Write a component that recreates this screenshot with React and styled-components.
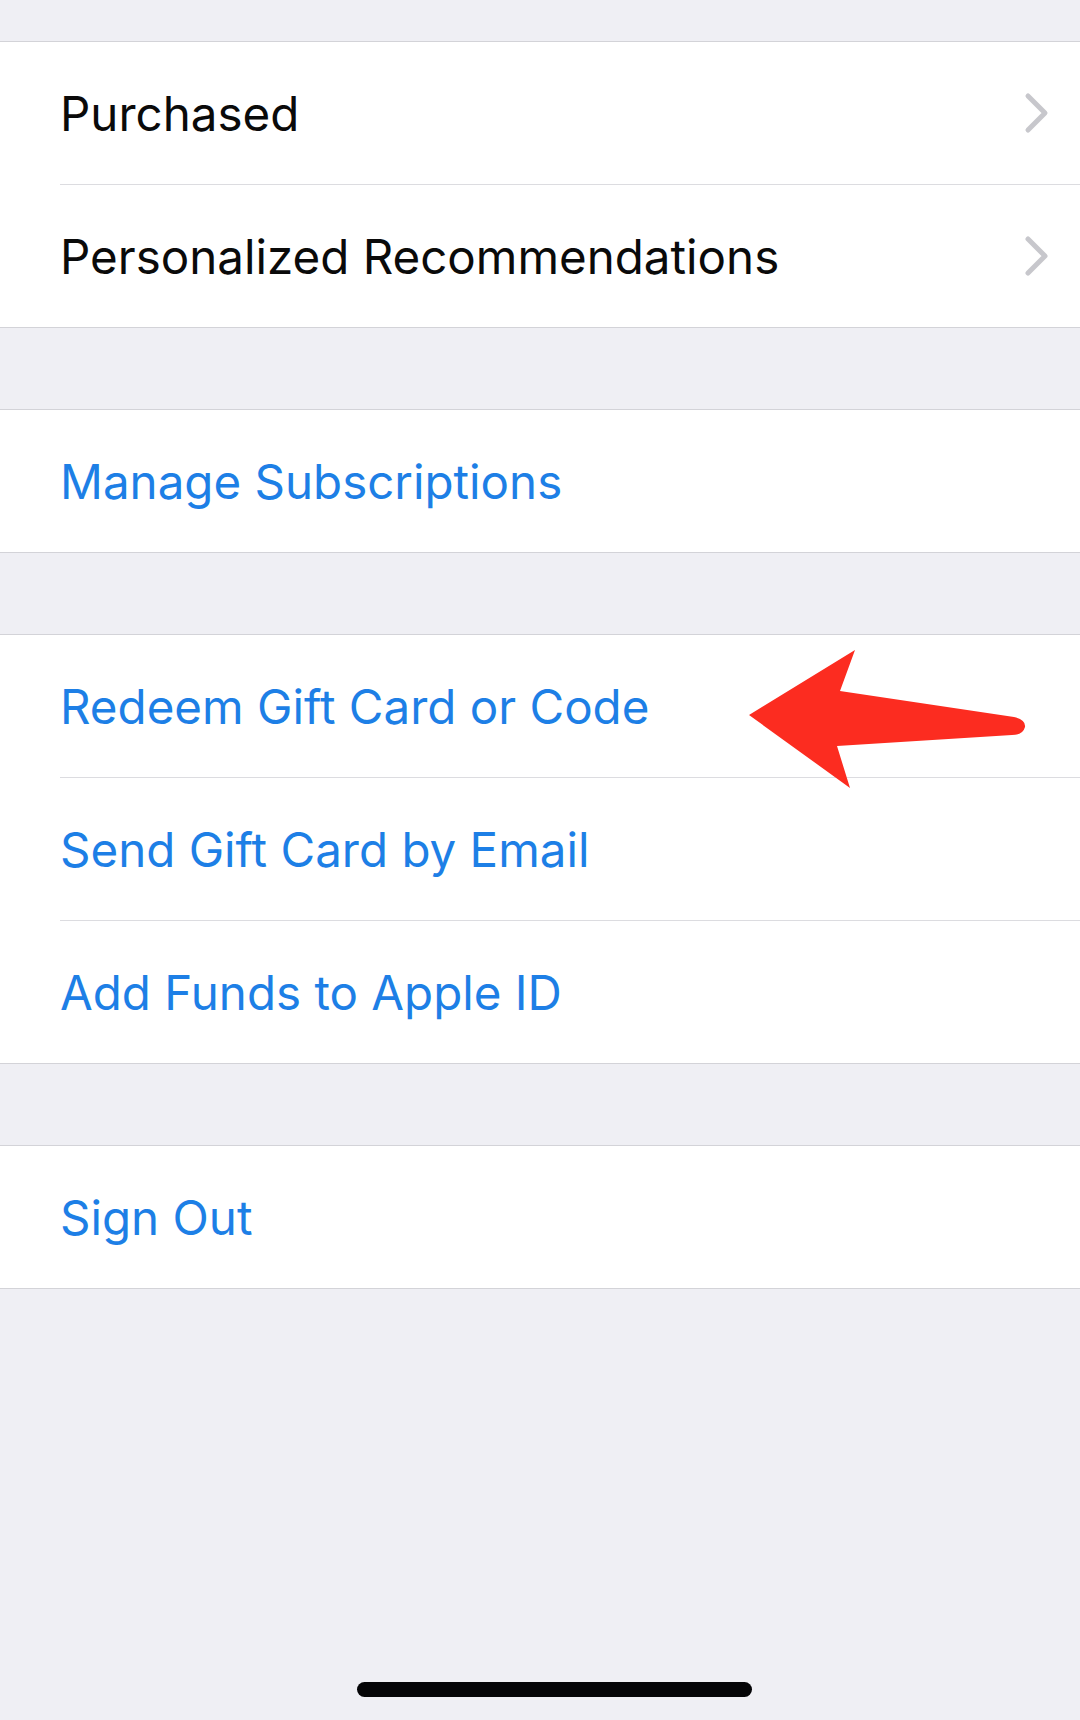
import React from "react";
import styled, { createGlobalStyle } from "styled-components";

const GlobalStyle = createGlobalStyle`
  html, body {
    margin: 0;
    padding: 0;
    background: #efeff4;
  }
  * {
    box-sizing: border-box;
  }
`;

const Page = styled.div`
  position: relative;
  width: 1080px;
  min-height: 1720px;
  padding-top: 41px;
  background: #efeff4;
  font-family: Inter, "Noto Sans", sans-serif;
`;

const Group = styled.div`
  background: #fff;
  border-top: 1px solid #d3d3d8;
  border-bottom: 1px solid #d3d3d8;
  margin-bottom: 81px;
`;

const Row = styled.div`
  display: flex;
  align-items: center;
  height: ${(p) => (p.last ? 142 : 143)}px;
  margin-left: 60px;
  padding-right: 30px;
  border-bottom: ${(p) => (p.last ? "none" : "1px solid #dcdce0")};
`;

const Label = styled.span`
  flex: 1;
  font-size: 47.5px;
  font-weight: 400;
  letter-spacing: 0;
  color: ${(p) => (p.link ? "#1d7fe6" : "#0a0a0a")};
`;

const Chevron = () => (
  <svg width="26" height="42" viewBox="0 0 26 42">
    <polyline
      points="4,4 21,21 4,38"
      fill="none"
      stroke="#c7c7cc"
      strokeWidth="5"
      strokeLinecap="round"
      strokeLinejoin="round"
    />
  </svg>
);

const Pointer = styled.svg`
  position: absolute;
  left: 740px;
  top: 640px;
`;

const HomeBar = styled.div`
  position: absolute;
  left: 357px;
  top: 1682px;
  width: 395px;
  height: 15px;
  border-radius: 8px;
  background: #050507;
`;

const groups = [
  [
    { label: "Purchased", chevron: true },
    { label: "Personalized Recommendations", chevron: true },
  ],
  [{ label: "Manage Subscriptions", link: true }],
  [
    { label: "Redeem Gift Card or Code", link: true },
    { label: "Send Gift Card by Email", link: true },
    { label: "Add Funds to Apple ID", link: true },
  ],
  [{ label: "Sign Out", link: true }],
];

export default function App() {
  return (
    <Page>
      <GlobalStyle />
      {groups.map((rows, gi) => (
        <Group key={gi}>
          {rows.map((r, ri) => (
            <Row key={r.label} last={ri === rows.length - 1}>
              <Label link={r.link}>{r.label}</Label>
              {r.chevron && <Chevron />}
            </Row>
          ))}
        </Group>
      ))}
      <Pointer width="300" height="160" viewBox="0 0 300 160">
        <path
          d="M9 75 L115 10 L100 51 L274 77 Q286 80 285 87 Q283 95 272 95 L97 106 L110 148 Z"
          fill="#fc2c20"
        />
      </Pointer>
      <HomeBar />
    </Page>
  );
}
